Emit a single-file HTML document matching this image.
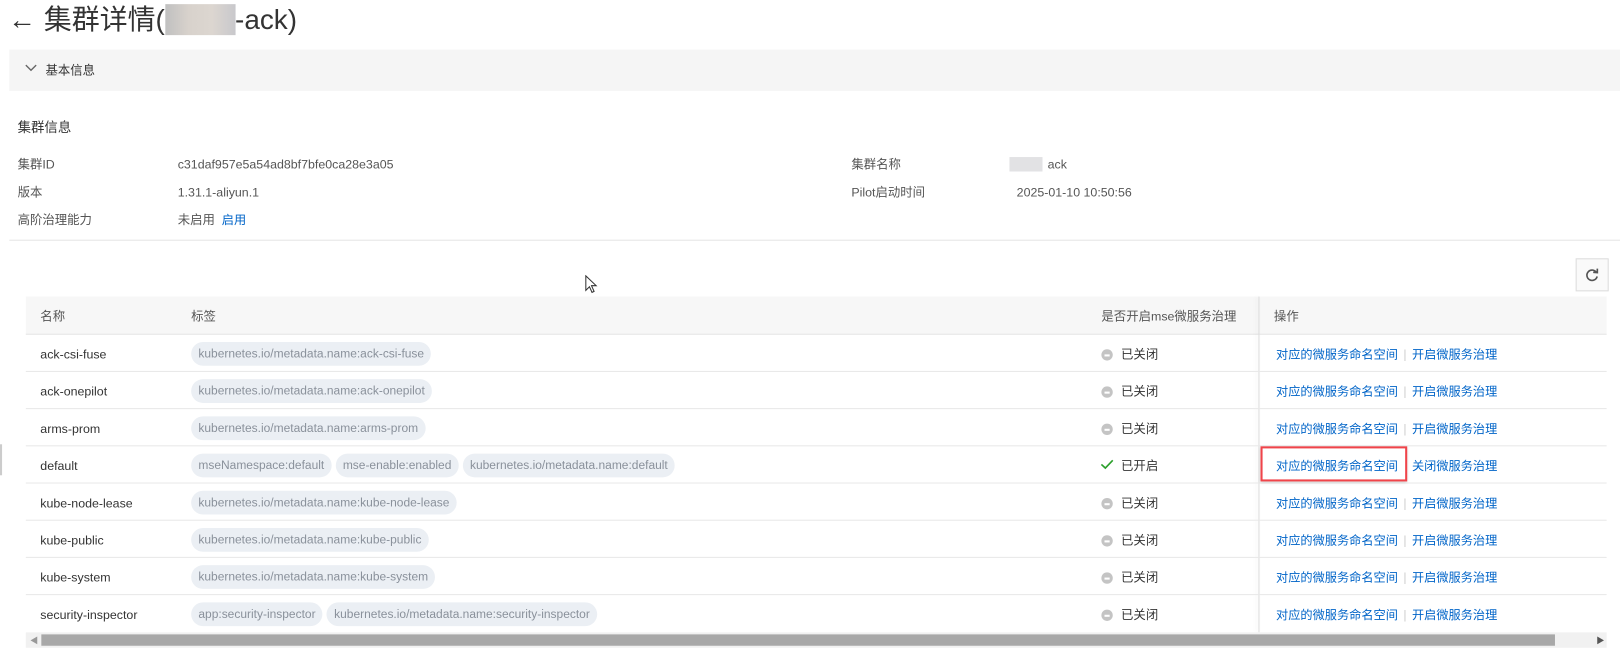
<!DOCTYPE html>
<html><head><meta charset="utf-8"><style>
*{margin:0;padding:0;box-sizing:border-box}
body{width:1620px;height:648px;overflow:hidden;background:#fff;font-family:"Liberation Sans","Noto Sans CJK SC",sans-serif;color:#333;font-size:12px;position:relative}
#w{position:absolute;left:0;top:0;width:1568px;height:628px;transform:scale(1.0332);transform-origin:0 0}
.a{position:absolute;white-space:nowrap}
.pl{position:absolute;left:185px;display:flex;gap:4px}
.pill{height:23px;line-height:23px;border-radius:12px;background:#ebeff4;color:#8a919b;padding:0 7px;font-size:11.6px;white-space:nowrap}
.link{color:#0064c8;font-size:11.8px}
.row{position:absolute;left:25px;width:1530px;height:36px;border-bottom:1px solid #e8e8e8}
.dot{position:absolute;width:11px;height:11px;border-radius:50%;background:#c4c4c4}
.dot:after{content:"";position:absolute;left:3px;top:5px;width:5px;height:1.5px;background:#fff}
</style></head><body><div id="w">
<div class="a" style="left:8px;top:0;font-size:27px;line-height:38px;color:#333">← 集群详情(<span style="display:inline-block;width:68px;height:30px;vertical-align:-6px;background:linear-gradient(90deg,#c0c0c0,#d8d2cc,#dcd6d0,#c8c8cc)"></span>-ack)</div>
<div class="a" style="left:9px;top:48px;width:1611px;height:40px;background:#f5f5f5"></div>
<svg class="a" style="left:24px;top:62px" width="12" height="8"><path d="M1 1 L6 6 L11 1" stroke="#666" stroke-width="1.3" fill="none"/></svg>
<div class="a" style="left:44px;top:60px;font-size:12px;line-height:16px">基本信息</div>
<div class="a" style="left:17px;top:115px;font-size:13px;line-height:18px">集群信息</div>
<div class="a" style="left:17px;top:151px;line-height:16px;color:#555">集群ID</div>
<div class="a" style="left:172px;top:151px;line-height:16px;color:#555">c31daf957e5a54ad8bf7bfe0ca28e3a05</div>
<div class="a" style="left:17px;top:178px;line-height:16px;color:#555">版本</div>
<div class="a" style="left:172px;top:178px;line-height:16px;color:#555">1.31.1-aliyun.1</div>
<div class="a" style="left:17px;top:205px;line-height:16px;color:#555">高阶治理能力</div>
<div class="a" style="left:172px;top:205px;line-height:16px;color:#555">未启用 &nbsp;<span class="link">启用</span></div>
<div class="a" style="left:824px;top:151px;line-height:16px;color:#555">集群名称</div>
<div class="a" style="left:977px;top:152px;width:32px;height:14px;background:#e2e2e4"></div>
<div class="a" style="left:1014px;top:151px;line-height:16px;color:#555">ack</div>
<div class="a" style="left:824px;top:178px;line-height:16px;color:#555">Pilot启动时间</div>
<div class="a" style="left:984px;top:178px;line-height:16px;color:#555">2025-01-10 10:50:56</div>
<div class="a" style="left:9px;top:232px;width:1611px;height:1px;background:#e5e5e5"></div>
<svg class="a" style="left:566px;top:266px" width="14" height="20"><path d="M1 1 L1 15 L4.5 11.5 L7 17 L9 16 L6.5 10.5 L11 10.5 Z" fill="#fff" stroke="#333" stroke-width="1"/></svg>
<div class="a" style="left:1525px;top:250px;width:32px;height:32px;border:1px solid #ddd;background:#fafafa"></div>
<svg class="a" style="left:1534px;top:259px" width="14" height="14"><path d="M11 4.5 A5 5 0 1 0 11.8 8.5" stroke="#555" stroke-width="1.6" fill="none"/><path d="M8 4.5 L12 4.8 L12 1" stroke="#555" stroke-width="1.6" fill="none"/></svg>
<div class="a" style="left:25px;top:287px;width:1530px;height:37px;background:#f7f7f7;border-bottom:1px solid #e5e5e5"></div>
<div class="a" style="left:39px;top:298px;line-height:16px;color:#555">名称</div>
<div class="a" style="left:185px;top:298px;line-height:16px;color:#555">标签</div>
<div class="a" style="left:1066px;top:298px;line-height:16px;color:#555">是否开启mse微服务治理</div>
<div class="a" style="left:1233px;top:298px;line-height:16px;color:#555">操作</div>
<div class="a" style="left:1218px;top:287px;width:1px;height:325px;background:#ddd;box-shadow:-2px 0 4px rgba(0,0,0,.08)"></div>

<div class="row" style="top:324px"></div><div class="row" style="top:360px"></div><div class="row" style="top:396px"></div><div class="row" style="top:432px"></div><div class="row" style="top:468px"></div><div class="row" style="top:504px"></div><div class="row" style="top:540px"></div>

<div class="a" style="left:39px;top:335px;line-height:16px">ack-csi-fuse</div>
<div class="pl" style="top:331px"><div class="pill">kubernetes.io/metadata.name:ack-csi-fuse</div></div>
<div class="a" style="left:39px;top:371px;line-height:16px">ack-onepilot</div>
<div class="pl" style="top:367px"><div class="pill">kubernetes.io/metadata.name:ack-onepilot</div></div>
<div class="a" style="left:39px;top:407px;line-height:16px">arms-prom</div>
<div class="pl" style="top:403px"><div class="pill">kubernetes.io/metadata.name:arms-prom</div></div>
<div class="a" style="left:39px;top:443px;line-height:16px">default</div>
<div class="pl" style="top:439px"><div class="pill">mseNamespace:default</div><div class="pill">mse-enable:enabled</div><div class="pill">kubernetes.io/metadata.name:default</div></div>
<div class="a" style="left:39px;top:479px;line-height:16px">kube-node-lease</div>
<div class="pl" style="top:475px"><div class="pill">kubernetes.io/metadata.name:kube-node-lease</div></div>
<div class="a" style="left:39px;top:515px;line-height:16px">kube-public</div>
<div class="pl" style="top:511px"><div class="pill">kubernetes.io/metadata.name:kube-public</div></div>
<div class="a" style="left:39px;top:551px;line-height:16px">kube-system</div>
<div class="pl" style="top:547px"><div class="pill">kubernetes.io/metadata.name:kube-system</div></div>
<div class="a" style="left:39px;top:587px;line-height:16px">security-inspector</div>
<div class="pl" style="top:583px"><div class="pill">app:security-inspector</div><div class="pill">kubernetes.io/metadata.name:security-inspector</div></div>

<div class="dot" style="left:1066px;top:338px"></div><div class="a" style="left:1085px;top:335px;line-height:16px">已关闭</div>
<div class="dot" style="left:1066px;top:374px"></div><div class="a" style="left:1085px;top:371px;line-height:16px">已关闭</div>
<div class="dot" style="left:1066px;top:410px"></div><div class="a" style="left:1085px;top:407px;line-height:16px">已关闭</div>
<svg class="a" style="left:1065px;top:444px" width="13" height="11"><path d="M1 5.5 L4.8 9 L12 1.5" stroke="#2ca02c" stroke-width="1.6" fill="none"/></svg><div class="a" style="left:1085px;top:443px;line-height:16px">已开启</div>
<div class="dot" style="left:1066px;top:482px"></div><div class="a" style="left:1085px;top:479px;line-height:16px">已关闭</div>
<div class="dot" style="left:1066px;top:518px"></div><div class="a" style="left:1085px;top:515px;line-height:16px">已关闭</div>
<div class="dot" style="left:1066px;top:554px"></div><div class="a" style="left:1085px;top:551px;line-height:16px">已关闭</div>
<div class="dot" style="left:1066px;top:590px"></div><div class="a" style="left:1085px;top:587px;line-height:16px">已关闭</div>

<div class="a link" style="left:1235px;top:335px;line-height:16px">对应的微服务命名空间 <span style="color:#ccc;margin:0 2px">|</span> 开启微服务治理</div>
<div class="a link" style="left:1235px;top:371px;line-height:16px">对应的微服务命名空间 <span style="color:#ccc;margin:0 2px">|</span> 开启微服务治理</div>
<div class="a link" style="left:1235px;top:407px;line-height:16px">对应的微服务命名空间 <span style="color:#ccc;margin:0 2px">|</span> 开启微服务治理</div>
<div class="a link" style="left:1235px;top:443px;line-height:16px">对应的微服务命名空间 <span style="color:#fff;margin:0 2px">|</span> 关闭微服务治理</div>
<div class="a" style="left:1220px;top:432px;width:142px;height:34px;border:2px solid #f0444a;box-shadow:0 1px 3px rgba(0,0,0,.2)"></div>
<div class="a link" style="left:1235px;top:479px;line-height:16px">对应的微服务命名空间 <span style="color:#ccc;margin:0 2px">|</span> 开启微服务治理</div>
<div class="a link" style="left:1235px;top:515px;line-height:16px">对应的微服务命名空间 <span style="color:#ccc;margin:0 2px">|</span> 开启微服务治理</div>
<div class="a link" style="left:1235px;top:551px;line-height:16px">对应的微服务命名空间 <span style="color:#ccc;margin:0 2px">|</span> 开启微服务治理</div>
<div class="a link" style="left:1235px;top:587px;line-height:16px">对应的微服务命名空间 <span style="color:#ccc;margin:0 2px">|</span> 开启微服务治理</div>

<div class="a" style="left:25px;top:612px;width:1530px;height:15px;background:#f1f1f1"></div>
<div class="a" style="left:40px;top:614px;width:1465px;height:11px;background:#a8a8a8"></div>
<div class="a" style="left:29px;top:615px;font-size:8px;color:#999">◀</div>
<div class="a" style="left:1545px;top:615px;font-size:8px;color:#555">▶</div>
<div class="a" style="left:0;top:430px;width:2px;height:30px;background:#ccc"></div>
</div></body></html>
